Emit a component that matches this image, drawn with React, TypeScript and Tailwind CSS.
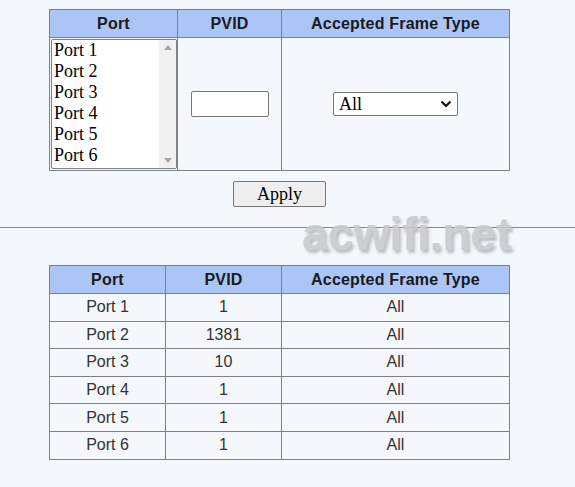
import React from "react";

const sans = { fontFamily: '"Liberation Sans", Arial, sans-serif' };
const serif = { fontFamily: '"Liberation Serif", "Times New Roman", serif' };

const rows = [
  ["Port 1", "1"],
  ["Port 2", "1381"],
  ["Port 3", "10"],
  ["Port 4", "1"],
  ["Port 5", "1"],
  ["Port 6", "1"],
];

export default function App() {
  return (
    <div className="relative w-[575px] h-[487px] bg-[#f4f7fc] overflow-hidden text-[#222]" style={sans}>
      <div className="pt-[9px] pl-[49px]">
        <table className="border-collapse w-[461px] border border-[#7c8088]">
          <thead>
            <tr className="bg-[#abc5f7] h-[28px] text-[16px] font-bold text-[#1a1a1a] tracking-[0.2px]">
              <th className="w-[128px] border border-[#7c8088] p-0">Port</th>
              <th className="w-[104px] border border-[#7c8088] p-0">PVID</th>
              <th className="border border-[#7c8088] p-0">Accepted Frame Type</th>
            </tr>
          </thead>
          <tbody>
            <tr className="h-[133px]">
              <td className="border border-[#7c8088] p-0 align-middle">
                <div className="ml-[1px] w-[126px] h-[130px] border border-[#808080] rounded-[2px] bg-white flex" style={serif}>
                  <div className="flex-1 pl-[2px] pt-[0px] text-[18px] leading-[21px] text-black">
                    {rows.map((r) => (
                      <div key={r[0]}>{r[0]}</div>
                    ))}
                  </div>
                  <div className="w-[17px] bg-[#f1f1f1] flex flex-col justify-between items-center py-[5px]">
                    <svg width="8" height="5" viewBox="0 0 8 5"><path d="M0 5 L4 0 L8 5 Z" fill="#a3a3a3" /></svg>
                    <svg width="8" height="5" viewBox="0 0 8 5"><path d="M0 0 L4 5 L8 0 Z" fill="#a3a3a3" /></svg>
                  </div>
                </div>
              </td>
              <td className="border border-[#7c8088] p-0 align-middle">
                <div className="flex justify-center">
                  <div className="w-[78px] h-[26px] bg-white border border-[#767676] rounded-[2px]" />
                </div>
              </td>
              <td className="border border-[#7c8088] p-0 align-middle">
                <div className="flex justify-center">
                  <div className="w-[125px] h-[24px] bg-white border border-[#767676] rounded-[2px] flex items-center justify-between pl-[5px] pr-[5px] text-[18px] text-black" style={serif}>
                    <span className="leading-none">All</span>
                    <svg width="12" height="8" viewBox="0 0 12 8"><path d="M1.5 1.5 L6 6 L10.5 1.5" fill="none" stroke="#111" strokeWidth="2.2" /></svg>
                  </div>
                </div>
              </td>
            </tr>
          </tbody>
        </table>
        <div className="mt-[10px] ml-[184px] w-[93px] h-[26px] bg-[#efefef] border border-[#767676] rounded-[2px] flex items-center justify-center text-[18px] text-black" style={serif}>
          Apply
        </div>
      </div>
      <div className="mt-[20px] h-px bg-[#8a8a8a] w-full" />
      <div className="pt-[37px] pl-[49px]">
        <table className="border-collapse w-[461px] border border-[#7c8088] text-[16px]">
          <thead>
            <tr className="bg-[#abc5f7] h-[28px] font-bold text-[#1a1a1a] tracking-[0.2px]">
              <th className="w-[116px] border border-[#7c8088] p-0">Port</th>
              <th className="w-[116px] border border-[#7c8088] p-0">PVID</th>
              <th className="border border-[#7c8088] p-0">Accepted Frame Type</th>
            </tr>
          </thead>
          <tbody className="text-[#333]">
            {rows.map((r) => (
              <tr key={r[0]} className="h-[27.6px] text-center">
                <td className="border border-[#7c8088] p-0">{r[0]}</td>
                <td className="border border-[#7c8088] p-0">{r[1]}</td>
                <td className="border border-[#7c8088] p-0">All</td>
              </tr>
            ))}
          </tbody>
        </table>
      </div>
      <div
        className="absolute left-[302px] top-[210px] text-[47px] font-bold text-[#c8cacd] opacity-90 leading-none tracking-[-0.5px]"
        style={{ ...sans, textShadow: "2px 3px 3px rgba(120,120,120,0.5)" }}
      >
        acwifi.net
      </div>
    </div>
  );
}
